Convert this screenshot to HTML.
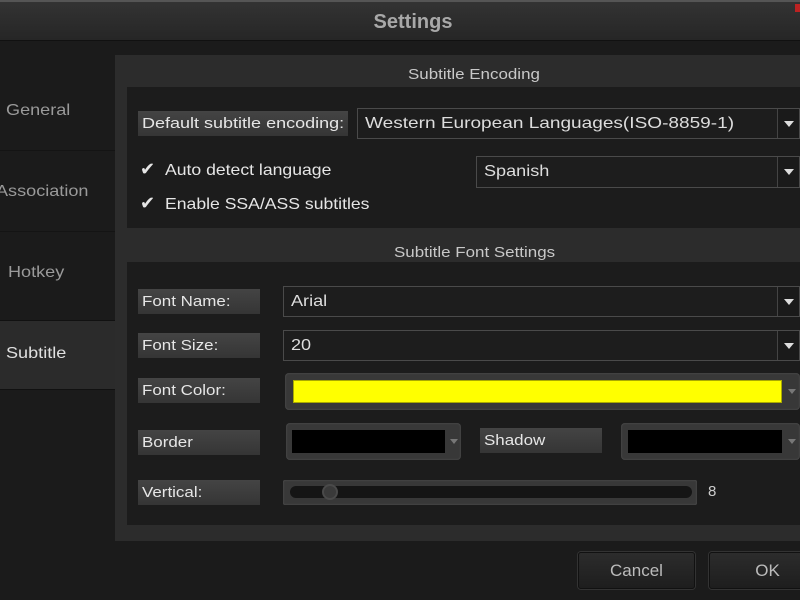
<!DOCTYPE html><html><head><style>
body{margin:0;width:800px;height:600px;overflow:hidden;background:#1b1b1b;font-family:"Liberation Sans",sans-serif;position:relative}
div{position:absolute;box-sizing:border-box}
span.s{display:inline-block;transform:scaleX(1.13);transform-origin:0 50%}
.t{color:#9a9a9a;font-size:16px}
.lbl{background:linear-gradient(#444,#353535);color:#e6e6e6;font-size:15px;padding-left:4px;line-height:25px;height:25px;white-space:nowrap}
.cb{border:1px solid #4a4a4a;background:#1d1d1d;color:#ddd;font-size:16px;padding-left:7px;white-space:nowrap}
.arr{right:0;top:0;bottom:0;width:22px;border-left:1px solid #444;background:#1a1a1a}
.arr:after{content:"";position:absolute;left:6px;top:50%;margin-top:-3px;border-left:5px solid transparent;border-right:5px solid transparent;border-top:6px solid #ddd}
.cc{background:#383838;border-radius:4px;box-shadow:inset 0 0 2px #555}
.sa{width:0;height:0;border-left:4px solid transparent;border-right:4px solid transparent;border-top:5px solid #777}
.btn{background:linear-gradient(#2c2c2c,#1e1e1e);border:1px solid #111;border-radius:3px;box-shadow:0 0 0 1px #333;color:#bbb;font-size:17px;text-align:center;line-height:36px}
</style></head><body>
<div style="left:0;top:0;width:800px;height:41px;background:linear-gradient(#333,#262626);border-top:2px solid #555;border-bottom:1px solid #111"></div>
<div style="left:0;top:11px;width:826px;text-align:center;color:#a8a8a8;font-size:20px;font-weight:bold">Settings</div>
<div style="left:795px;top:4px;width:5px;height:8px;background:#b22"></div>
<div style="left:0;top:41px;width:115px;height:559px;background:#1b1b1b"></div>
<div class="t" style="left:6px;top:102px"><span class="s">General</span></div>
<div style="left:0;top:150px;width:115px;height:1px;background:#141414"></div>
<div class="t" style="left:-4px;top:183px"><span class="s">Association</span></div>
<div style="left:0;top:231px;width:115px;height:1px;background:#141414"></div>
<div class="t" style="left:8px;top:264px"><span class="s">Hotkey</span></div>
<div style="left:0;top:320px;width:115px;height:70px;background:#2b2b2b;border-top:1px solid #111;border-bottom:1px solid #111"></div>
<div style="left:6px;top:345px;color:#e0e0e0;font-size:16px"><span class="s">Subtitle</span></div>
<div style="left:115px;top:55px;width:685px;height:486px;background:#2c2c2c"></div>
<div style="left:408px;top:66px;color:#c8c8c8;font-size:15px"><span class="s">Subtitle Encoding</span></div>
<div style="left:127px;top:87px;width:673px;height:141px;background:#1c1c1c"></div>
<div style="left:394px;top:244px;color:#c8c8c8;font-size:15px"><span class="s">Subtitle Font Settings</span></div>
<div style="left:127px;top:262px;width:673px;height:263px;background:#1c1c1c"></div>

<div class="lbl" style="left:138px;top:111px;width:210px"><span class="s" style="transform:scaleX(1.2)">Default subtitle encoding:</span></div>
<div class="cb" style="left:357px;top:108px;width:443px;height:31px;line-height:29px"><span class="s" style="transform:scaleX(1.19)">Western European Languages(ISO-8859-1)</span><div class="arr"></div></div>
<div style="left:140px;top:159px;color:#e6e6e6;font-size:18px">✔</div>
<div style="left:165px;top:162px;color:#e6e6e6;font-size:16px"><span class="s" style="transform:scaleX(1.1)">Auto detect language</span></div>
<div style="left:140px;top:193px;color:#e6e6e6;font-size:18px">✔</div>
<div style="left:165px;top:196px;color:#e6e6e6;font-size:16px"><span class="s" style="transform:scaleX(1.1)">Enable SSA/ASS subtitles</span></div>
<div class="cb" style="left:476px;top:156px;width:324px;height:32px;line-height:30px"><span class="s">Spanish</span><div class="arr"></div></div>

<div class="lbl" style="left:138px;top:289px;width:122px"><span class="s">Font Name:</span></div>
<div class="cb" style="left:283px;top:286px;width:517px;height:31px;line-height:29px"><span class="s">Arial</span><div class="arr"></div></div>
<div class="lbl" style="left:138px;top:333px;width:122px"><span class="s">Font Size:</span></div>
<div class="cb" style="left:283px;top:330px;width:517px;height:31px;line-height:29px"><span class="s">20</span><div class="arr"></div></div>
<div class="lbl" style="left:138px;top:378px;width:122px"><span class="s">Font Color:</span></div>
<div class="cc" style="left:285px;top:373px;width:515px;height:37px"><div style="left:8px;top:7px;width:489px;height:23px;background:#ff0;border:1px solid #aa0"></div><div class="sa" style="left:503px;top:16px"></div></div>
<div class="lbl" style="left:138px;top:430px;width:122px"><span class="s">Border</span></div>
<div class="cc" style="left:286px;top:423px;width:175px;height:37px"><div style="left:6px;top:7px;width:153px;height:23px;background:#000"></div><div class="sa" style="left:164px;top:16px"></div></div>
<div class="lbl" style="left:480px;top:428px;width:122px"><span class="s">Shadow</span></div>
<div class="cc" style="left:621px;top:423px;width:179px;height:37px"><div style="left:7px;top:7px;width:154px;height:23px;background:#000"></div><div class="sa" style="left:167px;top:16px"></div></div>
<div class="lbl" style="left:138px;top:480px;width:122px"><span class="s">Vertical:</span></div>
<div class="cc" style="left:283px;top:480px;width:414px;height:25px;border-radius:2px"><div style="left:7px;top:6px;width:402px;height:12px;background:#151515;border-radius:6px"></div><div style="left:39px;top:4px;width:16px;height:16px;border-radius:50%;background:#3a3a3a;border:2px solid #4a4a4a"></div></div>
<div style="left:708px;top:483px;color:#ccc;font-size:15px">8</div>

<div class="btn" style="left:578px;top:552px;width:117px;height:37px">Cancel</div>
<div class="btn" style="left:709px;top:552px;width:120px;height:37px;padding-right:3px">OK</div>
</body></html>
